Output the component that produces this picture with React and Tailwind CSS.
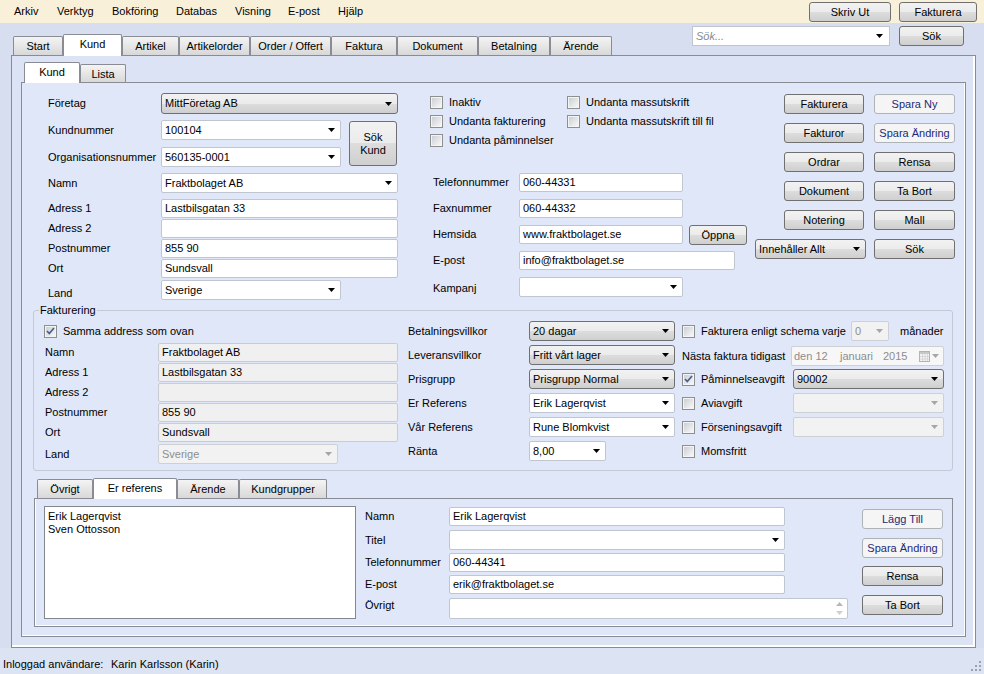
import React from 'react';
import clsx from 'clsx';

// windows 7 style button face
const FACE = 'bg-[linear-gradient(to_bottom,#f2f2f2_0%,#ebebeb_50%,#dddddd_50%,#cfcfcf_100%)]';

function Arrow({ gray }) {
  return (
    <svg width="7" height="4" viewBox="0 0 7 4" className="shrink-0">
      <path d="M0 0h7L3.5 4z" fill={gray ? '#a6a6a6' : '#000000'} />
    </svg>
  );
}

function Input({ w, h = 'h-[19px]', disabled, children }) {
  return (
    <div
      className={clsx(
        w,
        h,
        'flex items-center pl-[3px] border rounded-[2px] whitespace-nowrap overflow-hidden shrink-0',
        disabled ? 'bg-[#f0f0f0] border-[#c8ccd2]' : 'bg-white border-[#bfc6d0]'
      )}
    >
      {children}
    </div>
  );
}

function Combo({ w, h = 'h-[20px]', disabled, children }) {
  return (
    <div
      className={clsx(
        w,
        h,
        'flex items-center pl-[3px] pr-[5px] border rounded-[2px] whitespace-nowrap shrink-0',
        disabled ? 'bg-[#f2f2f2] border-[#cdd1d6] text-[#8d8d8d]' : 'bg-white border-[#bfc6d0]'
      )}
    >
      <span className="flex-1 overflow-hidden">{children}</span>
      <Arrow gray={disabled} />
    </div>
  );
}

function DropList({ w, h = 'h-[20px]', children }) {
  return (
    <div className={clsx(w, h, FACE, 'flex items-center pl-[3px] pr-[5px] border border-[#707070] rounded-[3px] whitespace-nowrap shrink-0')}>
      <span className="flex-1">{children}</span>
      <Arrow />
    </div>
  );
}

function Button({ w, h = 'h-[20px]', soft, children }) {
  return (
    <button
      type="button"
      className={clsx(
        w,
        h,
        'flex items-center justify-center rounded-[3px] border shrink-0 leading-[13px] text-center whitespace-nowrap',
        soft ? 'bg-[#f5f5f5] border-[#aeb3b8] text-[#1e2a78]' : [FACE, 'border-[#707070]']
      )}
    >
      {children}
    </button>
  );
}

function Check({ checked }) {
  return (
    <span className="w-[13px] h-[13px] border border-[#8e8f8f] bg-[#f4f4f4] p-[1px] shrink-0 flex">
      <span className="flex-1 bg-[linear-gradient(135deg,#cbcfd5,#f7f7f7)] flex items-center justify-center">
        {checked && (
          <svg width="9" height="8" viewBox="0 0 9 8">
            <path d="M1 4l2.3 2.5L8 1" stroke="#4a5f8e" strokeWidth="1.7" fill="none" />
          </svg>
        )}
      </span>
    </span>
  );
}

function CheckLabel({ checked, className, children }) {
  return (
    <div className={clsx('flex items-center gap-[6px] whitespace-nowrap shrink-0', className)}>
      <Check checked={checked} />
      <span>{children}</span>
    </div>
  );
}

function Tab({ w, h, active, children }) {
  return (
    <div
      className={clsx(
        w,
        h,
        'flex justify-center border border-b-0 border-[#898c95] rounded-t-[2px] whitespace-nowrap shrink-0',
        active
          ? 'relative z-10 -mb-px bg-white items-start pt-[3px]'
          : 'bg-[linear-gradient(to_bottom,#f4f4f4,#e6e6e6_50%,#d8d8d8)] items-center pt-[1px]'
      )}
    >
      {children}
    </div>
  );
}

const menu = [
  ['Arkiv', 'w-[43px]'],
  ['Verktyg', 'w-[55px]'],
  ['Bokföring', 'w-[64px]'],
  ['Databas', 'w-[59px]'],
  ['Visning', 'w-[53px]'],
  ['E-post', 'w-[50px]'],
  ['Hjälp', 'w-[40px]'],
];

const mainTabs = [
  ['Start', 'w-[50px]'],
  ['Kund', 'w-[59px]', true],
  ['Artikel', 'w-[57px]'],
  ['Artikelorder', 'w-[71px]'],
  ['Order / Offert', 'w-[81px]'],
  ['Faktura', 'w-[66px]'],
  ['Dokument', 'w-[81px]'],
  ['Betalning', 'w-[72px]'],
  ['Ärende', 'w-[62px]'],
];

const rightButtons = [
  ['Fakturera', 'Spara Ny', true],
  ['Fakturor', 'Spara Ändring', true],
  ['Ordrar', 'Rensa'],
  ['Dokument', 'Ta Bort'],
  ['Notering', 'Mall'],
];

export default function App() {
  return (
    <div className="w-[984px] h-[674px] overflow-hidden bg-[#d6def0] text-[11px] leading-[13px] text-black flex flex-col font-['Liberation_Sans',Arial,sans-serif]">
      {/* menu bar */}
      <div className="h-[23px] bg-[#f9f0da] flex shrink-0">
        <div className="flex items-center pl-[14px]">
          {menu.map(([t, w]) => (
            <span key={t} className={w}>{t}</span>
          ))}
        </div>
        <div className="ml-auto flex gap-[8px] pr-[7px] pt-[2px]">
          <Button w="w-[82px]">Skriv Ut</Button>
          <Button w="w-[78px]">Fakturera</Button>
        </div>
      </div>

      {/* main tabs + search */}
      <div className="h-[32px] flex shrink-0">
        <div className="flex items-end pl-[13px]">
          {mainTabs.map(([t, w, a]) => (
            <Tab key={t} w={w} h={a ? 'h-[22px]' : 'h-[19px]'} active={a}>{t}</Tab>
          ))}
        </div>
        <div className="ml-auto flex items-start gap-[9px] pr-[20px] pt-[3px]">
          <div className="w-[198px] h-[20px] bg-white border border-[#bfc6d0] flex items-center pl-[3px] pr-[6px]">
            <span className="flex-1 italic text-[#8a8a8a]">Sök...</span>
            <Arrow />
          </div>
          <Button w="w-[65px]">Sök</Button>
        </div>
      </div>

      {/* main tab page */}
      <div className="ml-[11px] w-[965px] h-[593px] shrink-0 border border-[#898c95] bg-[#dbe3f4] shadow-[inset_-2px_-2px_0_#ffffff] flex flex-col pt-[6px] px-[9px] pb-[10px]">
        <div className="flex items-end pl-[3px]">
          <Tab w="w-[56px]" h="h-[21px]" active>Kund</Tab>
          <Tab w="w-[46px]" h="h-[18px]">Lista</Tab>
        </div>

        {/* Kund page */}
        <div className="flex-1 border border-[#898c95] bg-[#dfe7f8] shadow-[inset_-1px_-1px_0_#ffffff] pt-[10px] pl-[11px] pr-[10px] flex flex-col">
          <div className="flex pl-[15px]">
            {/* left block */}
            <div className="w-[350px] flex flex-col shrink-0">
              <div className="flex items-center h-[21px]">
                <span className="w-[113px]">Företag</span>
                <DropList w="w-[237px]" h="h-[21px]">MittFöretag AB</DropList>
              </div>
              <div className="flex mt-[6px]">
                <div className="flex flex-col">
                  <div className="flex items-center h-[20px]">
                    <span className="w-[113px]">Kundnummer</span>
                    <Combo w="w-[180px]">100104</Combo>
                  </div>
                  <div className="flex items-center h-[20px] mt-[7px]">
                    <span className="w-[113px]">Organisationsnummer</span>
                    <Combo w="w-[180px]">560135-0001</Combo>
                  </div>
                </div>
                <div className="ml-[8px] mt-[1px]">
                  <Button w="w-[48px]" h="h-[45px]">Sök<br />Kund</Button>
                </div>
              </div>
              <div className="flex items-center h-[20px] mt-[6px]">
                <span className="w-[113px]">Namn</span>
                <Combo w="w-[237px]">Fraktbolaget AB</Combo>
              </div>
              {[
                ['Adress 1', 'Lastbilsgatan 33', 'mt-[6px]'],
                ['Adress 2', '', 'mt-[1px]'],
                ['Postnummer', '855 90', 'mt-[1px]'],
                ['Ort', 'Sundsvall', 'mt-[1px]'],
              ].map(([l, v, m]) => (
                <div key={l} className={clsx('flex items-center h-[19px]', m)}>
                  <span className="w-[113px]">{l}</span>
                  <Input w="w-[237px]">{v}</Input>
                </div>
              ))}
              <div className="flex items-center h-[20px] mt-[2px]">
                <span className="w-[113px] pt-[6px]">Land</span>
                <Combo w="w-[180px]">Sverige</Combo>
              </div>
            </div>

            {/* middle block */}
            <div className="w-[317px] ml-[32px] flex flex-col shrink-0">
              <div className="flex">
                <div className="w-[137px] flex flex-col">
                  <CheckLabel className="h-[19px]">Inaktiv</CheckLabel>
                  <CheckLabel className="h-[19px]">Undanta fakturering</CheckLabel>
                  <CheckLabel className="h-[19px]">Undanta påminnelser</CheckLabel>
                </div>
                <div className="flex flex-col">
                  <CheckLabel className="h-[19px]">Undanta massutskrift</CheckLabel>
                  <CheckLabel className="h-[19px]">Undanta massutskrift till fil</CheckLabel>
                </div>
              </div>
              <div className="flex flex-col pl-[3px] mt-[23px] gap-[7px]">
                <div className="flex items-center h-[19px]">
                  <span className="w-[86px]">Telefonnummer</span>
                  <Input w="w-[164px]">060-44331</Input>
                </div>
                <div className="flex items-center h-[19px]">
                  <span className="w-[86px]">Faxnummer</span>
                  <Input w="w-[164px]">060-44332</Input>
                </div>
                <div className="flex items-center h-[19px]">
                  <span className="w-[86px]">Hemsida</span>
                  <Input w="w-[164px]">www.fraktbolaget.se</Input>
                  <div className="ml-[6px] self-start">
                    <Button w="w-[58px]">Öppna</Button>
                  </div>
                </div>
                <div className="flex items-center h-[19px]">
                  <span className="w-[86px]">E-post</span>
                  <Input w="w-[216px]">info@fraktbolaget.se</Input>
                </div>
                <div className="flex items-center h-[20px]">
                  <span className="w-[86px] pt-[2px]">Kampanj</span>
                  <Combo w="w-[164px]"></Combo>
                </div>
              </div>
            </div>

            {/* right buttons */}
            <div className="w-[200px] ml-[8px] mt-[1px] flex flex-col gap-[9px] shrink-0">
              {rightButtons.map(([a, b, soft]) => (
                <div key={a} className="flex justify-end gap-[10px]">
                  <Button w="w-[80px]">{a}</Button>
                  <Button w="w-[81px]" soft={soft}>{b}</Button>
                </div>
              ))}
              <div className="flex justify-end gap-[8px]">
                <DropList w="w-[111px]">Innehåller Allt</DropList>
                <Button w="w-[81px]">Sök</Button>
              </div>
            </div>
          </div>

          {/* Fakturering */}
          <fieldset className="mt-[4px] mr-[2px] border border-[#c4cad4] rounded-[3px] pl-[10px] pb-[6px]">
            <legend className="-ml-[5px] px-[1px] leading-[13px]">Fakturering</legend>
            <div className="flex mt-[4px]">
              <div className="w-[354px] flex flex-col shrink-0">
                <CheckLabel checked className="h-[20px]">Samma address som ovan</CheckLabel>
                {[
                  ['Namn', 'Fraktbolaget AB', 'mt-[2px]'],
                  ['Adress 1', 'Lastbilsgatan 33', 'mt-[1px]'],
                  ['Adress 2', '', 'mt-[1px]'],
                  ['Postnummer', '855 90', 'mt-[1px]'],
                  ['Ort', 'Sundsvall', 'mt-[1px]'],
                ].map(([l, v, m]) => (
                  <div key={l} className={clsx('flex items-center h-[19px]', m)}>
                    <span className="w-[114px] pl-[1px]">{l}</span>
                    <Input w="w-[240px]" disabled>{v}</Input>
                  </div>
                ))}
                <div className="flex items-center h-[20px] mt-[2px]">
                  <span className="w-[114px] pl-[1px]">Land</span>
                  <Combo w="w-[180px]" disabled>Sverige</Combo>
                </div>
              </div>

              <div className="w-[267px] ml-[10px] flex flex-col gap-[4px] shrink-0">
                <div className="flex items-center h-[20px]">
                  <span className="w-[121px]">Betalningsvillkor</span>
                  <DropList w="w-[146px]">20 dagar</DropList>
                </div>
                <div className="flex items-center h-[20px]">
                  <span className="w-[121px]">Leveransvillkor</span>
                  <DropList w="w-[146px]">Fritt vårt lager</DropList>
                </div>
                <div className="flex items-center h-[20px]">
                  <span className="w-[121px]">Prisgrupp</span>
                  <DropList w="w-[146px]">Prisgrupp Normal</DropList>
                </div>
                <div className="flex items-center h-[20px]">
                  <span className="w-[121px]">Er Referens</span>
                  <Combo w="w-[146px]">Erik Lagerqvist</Combo>
                </div>
                <div className="flex items-center h-[20px]">
                  <span className="w-[121px]">Vår Referens</span>
                  <Combo w="w-[146px]">Rune Blomkvist</Combo>
                </div>
                <div className="flex items-center h-[20px]">
                  <span className="w-[121px]">Ränta</span>
                  <Combo w="w-[77px]">8,00</Combo>
                </div>
              </div>

              <div className="ml-[7px] flex flex-col gap-[4px]">
                <div className="flex items-center h-[20px]">
                  <CheckLabel className="w-[169px]">Fakturera enligt schema varje</CheckLabel>
                  <Combo w="w-[38px]" disabled>0</Combo>
                  <span className="ml-[11px]">månader</span>
                </div>
                <div className="flex items-center h-[20px] mt-[1px]">
                  <span className="w-[109px] whitespace-nowrap">Nästa faktura tidigast</span>
                  <div className="w-[153px] h-[20px] bg-[#f7f7f7] border border-[#cdd1d6] rounded-[2px] flex items-center pl-[2px] pr-[4px] text-[#8d8d8d] whitespace-nowrap">
                    <span className="w-[46px]">den 12</span>
                    <span className="w-[43px]">januari</span>
                    <span className="flex-1">2015</span>
                    <svg width="11" height="11" viewBox="0 0 11 11" className="mr-[2px]">
                      <rect x="0.5" y="0.5" width="10" height="10" fill="#f4f4f4" stroke="#b4b4b4" />
                      <rect x="1" y="1" width="9" height="2" fill="#c8c8c8" />
                      <path d="M1 5.5h9M1 8h9M3.5 3v7M6 3v7M8.5 3v7" stroke="#d2d2d2" strokeWidth="0.8" />
                    </svg>
                    <Arrow gray />
                  </div>
                </div>
                <div className="flex items-center h-[20px] -mt-[1px]">
                  <CheckLabel checked className="w-[111px]">Påminnelseavgift</CheckLabel>
                  <DropList w="w-[151px]">90002</DropList>
                </div>
                <div className="flex items-center h-[20px]">
                  <CheckLabel className="w-[111px]">Aviavgift</CheckLabel>
                  <Combo w="w-[151px]" disabled></Combo>
                </div>
                <div className="flex items-center h-[20px]">
                  <CheckLabel className="w-[111px]">Förseningsavgift</CheckLabel>
                  <Combo w="w-[151px]" disabled></Combo>
                </div>
                <div className="flex items-center h-[20px]">
                  <CheckLabel>Momsfritt</CheckLabel>
                </div>
              </div>
            </div>
          </fieldset>

          {/* bottom tabs */}
          <div className="mt-[7px] ml-[1px] mr-[2px] flex flex-col">
            <div className="flex items-end pl-[3px]">
              <Tab w="w-[56px]" h="h-[19px]">Övrigt</Tab>
              <Tab w="w-[84px]" h="h-[21px]" active>Er referens</Tab>
              <Tab w="w-[62px]" h="h-[19px]">Ärende</Tab>
              <Tab w="w-[88px]" h="h-[19px]">Kundgrupper</Tab>
            </div>
            <div className="border border-[#898c95] bg-[#dfe7f8] shadow-[inset_1px_-1px_0_#ffffff] flex pt-[7px] pl-[9px] pb-[7px]">
              <div className="w-[312px] h-[113px] bg-white border border-[#828790] pl-[3px] pt-[3px] flex flex-col shrink-0">
                <span>Erik Lagerqvist</span>
                <span>Sven Ottosson</span>
              </div>
              <div className="ml-[9px] flex flex-col shrink-0">
                <div className="flex items-center h-[19px] mt-[1px]">
                  <span className="w-[84px]">Namn</span>
                  <Input w="w-[336px]">Erik Lagerqvist</Input>
                </div>
                <div className="flex items-center h-[20px] mt-[4px]">
                  <span className="w-[84px]">Titel</span>
                  <Combo w="w-[336px]"></Combo>
                </div>
                <div className="flex items-center h-[19px] mt-[3px]">
                  <span className="w-[84px]">Telefonnummer</span>
                  <Input w="w-[336px]">060-44341</Input>
                </div>
                <div className="flex items-center h-[19px] mt-[3px]">
                  <span className="w-[84px]">E-post</span>
                  <Input w="w-[336px]">erik@fraktbolaget.se</Input>
                </div>
                <div className="flex items-start h-[21px] mt-[4px]">
                  <span className="w-[84px] pt-[1px]">Övrigt</span>
                  <div className="w-[399px] h-[21px] bg-white border border-[#bfc6d0] rounded-[2px] flex justify-end">
                    <div className="w-[16px] flex flex-col items-center justify-center gap-[5px]">
                      <svg width="7" height="4" viewBox="0 0 7 4"><path d="M0 4h7L3.5 0z" fill="#b8b8b8" /></svg>
                      <svg width="7" height="4" viewBox="0 0 7 4"><path d="M0 0h7L3.5 4z" fill="#d0d0d0" /></svg>
                    </div>
                  </div>
                </div>
              </div>
              <div className="ml-[14px] mt-[3px] flex flex-col">
                <Button w="w-[81px]" soft>Lägg Till</Button>
                <div className="mt-[9px]"><Button w="w-[81px]" soft>Spara Ändring</Button></div>
                <div className="mt-[8px]"><Button w="w-[81px]">Rensa</Button></div>
                <div className="mt-[9px]"><Button w="w-[81px]">Ta Bort</Button></div>
              </div>
            </div>
          </div>
        </div>
      </div>

      {/* status bar */}
      <div className="flex-1 bg-[#dce4f4] flex items-end pl-[3px] pr-[2px] pb-[3px]">
        <span className="w-[108px]">Inloggad användare:</span>
        <span>Karin Karlsson (Karin)</span>
        <svg width="11" height="11" viewBox="0 0 11 11" className="ml-auto mb-[-1px]">
          {[[8, 0], [8, 4], [4, 4], [8, 8], [4, 8], [0, 8]].map(([x, y]) => (
            <rect key={`${x}-${y}`} x={x} y={y} width="2" height="2" fill="#9aa3b5" />
          ))}
        </svg>
      </div>
    </div>
  );
}
